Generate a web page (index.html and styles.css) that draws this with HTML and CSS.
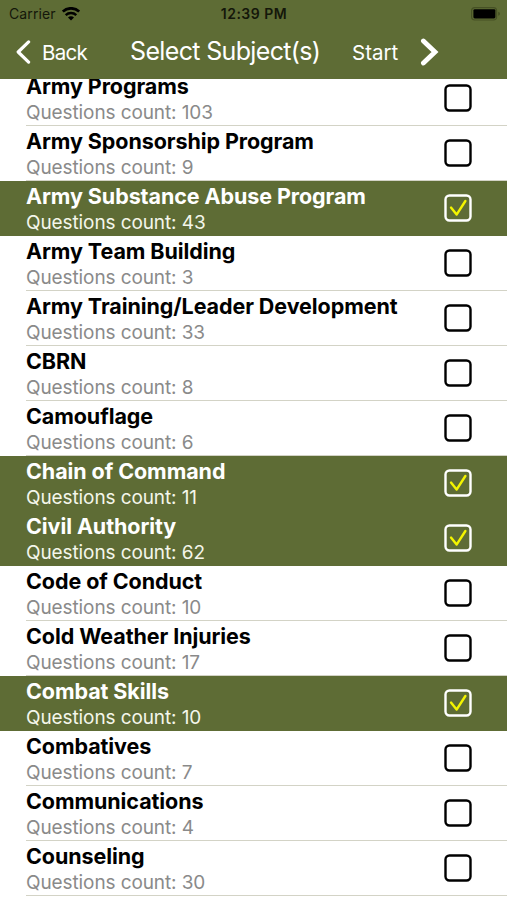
FILE: index.html
```html
<!DOCTYPE html>
<html lang="en">
<head>
    <meta charset="UTF-8">
    <meta name="viewport" content="width=device-width, initial-scale=1.0">
    <title>Select Subject(s)</title>
    <link rel="stylesheet" href="styles.css">
</head>
<body>
    <header class="header">
        <div class="status-bar">
            <div class="status-left">
                <span class="carrier">Carrier</span>
                <svg class="wifi" viewBox="0 0 18 14" width="18" height="14">
                    <path d="M.8 4.6a11.8 11.8 0 0 1 16.4 0" fill="none" stroke="#000" stroke-width="2.7"/>
                    <path d="M3.7 8.1a7.6 7.6 0 0 1 10.6 0" fill="none" stroke="#000" stroke-width="2.4"/>
                    <path d="M6 10.4a4.2 4.2 0 0 1 6 0L9 13.6z" fill="#000"/>
                </svg>
            </div>
            <span class="time">12:39 PM</span>
            <svg class="battery" viewBox="0 0 30 14" width="30" height="14">
                <rect x=".6" y=".6" width="25" height="12.4" rx="3.2" fill="none" stroke="#465125" stroke-width="1.2"/>
                <rect x="2.4" y="2.2" width="22" height="9.2" rx="1.4" fill="#000"/>
                <path d="M27.2 4.8q1.8.7 1.8 2t-1.8 2z" fill="#465125"/>
            </svg>
        </div>
        <nav class="nav-bar">
            <button class="nav-button back">
                <svg viewBox="0 0 16 24" width="16" height="24"><path d="M13.6 1.9L3.2 12l10.4 10.1" fill="none" stroke="#fff" stroke-width="3.2" stroke-linecap="round" stroke-linejoin="round"/></svg>
                <span>Back</span>
            </button>
            <h1 class="title">Select Subject(s)</h1>
            <button class="nav-button start">
                <span>Start</span>
                <svg viewBox="0 0 20 28" width="20" height="28"><path d="M4.4 3L16 14 4.4 25" fill="none" stroke="#fff" stroke-width="4.8" stroke-linecap="round"/></svg>
            </button>
        </nav>
    </header>
    <main class="list" id="list"></main>

    <script>
        const subjects = [
            { name: 'Army Programs', count: 103 },
            { name: 'Army Sponsorship Program', count: 9 },
            { name: 'Army Substance Abuse Program', count: 43, selected: true },
            { name: 'Army Team Building', count: 3 },
            { name: 'Army Training/Leader Development', count: 33 },
            { name: 'CBRN', count: 8 },
            { name: 'Camouflage', count: 6 },
            { name: 'Chain of Command', count: 11, selected: true },
            { name: 'Civil Authority', count: 62, selected: true },
            { name: 'Code of Conduct', count: 10 },
            { name: 'Cold Weather Injuries', count: 17 },
            { name: 'Combat Skills', count: 10, selected: true },
            { name: 'Combatives', count: 7 },
            { name: 'Communications', count: 4 },
            { name: 'Counseling', count: 30 }
        ];

        const list = document.getElementById('list');

        list.innerHTML = subjects.map(s => `
            <div class="row${s.selected ? ' selected' : ''}">
                <div class="row-body">
                    <div class="row-text">
                        <div class="name">${s.name}</div>
                        <div class="count">Questions count: ${s.count}</div>
                    </div>
                    <svg class="checkbox" viewBox="0 0 28 28" width="28" height="28">
                        <rect class="box" x="1.5" y="1.5" width="25" height="25" rx="4"/>
                        <path class="check" d="M7 13.6l5.6 7L21.4 7"/>
                    </svg>
                </div>
            </div>
        `).join('');

        list.addEventListener('click', function(e) {
            const row = e.target.closest('.row');
            if (row) row.classList.toggle('selected');
        });
    </script>
</body>
</html>
```
FILE: styles.css
```css
* {
    box-sizing: border-box;
}
body {
    margin: 0;
    height: 900px;
    overflow: hidden;
    display: flex;
    flex-direction: column;
    font-family: Inter, Roboto, sans-serif;
    background-color: #fff;
    color: #000;
}
.header {
    flex: none;
    height: 79px;
    background-color: #5e6c35;
}
.status-bar {
    display: grid;
    grid-template-columns: 1fr auto 1fr;
    align-items: center;
    height: 27px;
    padding: 0 6px 0 9px;
    font-size: 14px;
    color: #14170a;
}
.status-left {
    display: flex;
    align-items: center;
    gap: 6px;
}
.carrier {
    letter-spacing: 0.1px;
}
.time {
    margin-right: 2px;
    font-weight: 600;
    letter-spacing: 0.5px;
}
.battery {
    justify-self: end;
}
.nav-bar {
    display: flex;
    align-items: center;
    height: 50px;
    padding-left: 15px;
    color: #fff;
}
.nav-button {
    display: flex;
    align-items: center;
    padding: 0;
    border: none;
    background: none;
    color: #fff;
    font-family: inherit;
    font-size: 20.5px;
    cursor: pointer;
}
.back {
    width: 115px;
    gap: 11px;
    letter-spacing: -0.7px;
}
.title {
    width: 222px;
    margin: -2px 0 0;
    font-size: 25px;
    font-weight: 400;
    letter-spacing: -0.65px;
    white-space: nowrap;
}
.start {
    gap: 21px;
}
.list {
    flex: 1;
    overflow: hidden;
}
.row {
    height: 55px;
    padding-left: 26px;
}
/* the list is scrolled a little under the header */
.row:first-child {
    margin-top: -8px;
}
.row-body {
    display: flex;
    justify-content: space-between;
    height: 55px;
    padding-right: 35px;
    border-bottom: 1px solid #d3d3c6;
}
.name {
    margin-top: 2px;
    font-size: 21.5px;
    line-height: 26px;
    font-weight: 700;
    letter-spacing: -0.08px;
}
.count {
    margin-top: 2px;
    font-size: 19px;
    line-height: 24px;
    letter-spacing: -0.1px;
    color: #8a8a8a;
}
.checkbox {
    margin-top: 13px;
}
.box {
    fill: none;
    stroke: #000;
    stroke-width: 2.4;
}
.check {
    display: none;
    fill: none;
    stroke: #f4f400;
    stroke-width: 2.4;
    stroke-linecap: round;
    stroke-linejoin: round;
}
.selected {
    background-color: #5e6c35;
    color: #fff;
}
.selected .row-body {
    border-color: transparent;
}
.selected .count {
    color: #f4f6ea;
}
.selected .box {
    stroke: #fff;
}
.selected .check {
    display: block;
}
```
